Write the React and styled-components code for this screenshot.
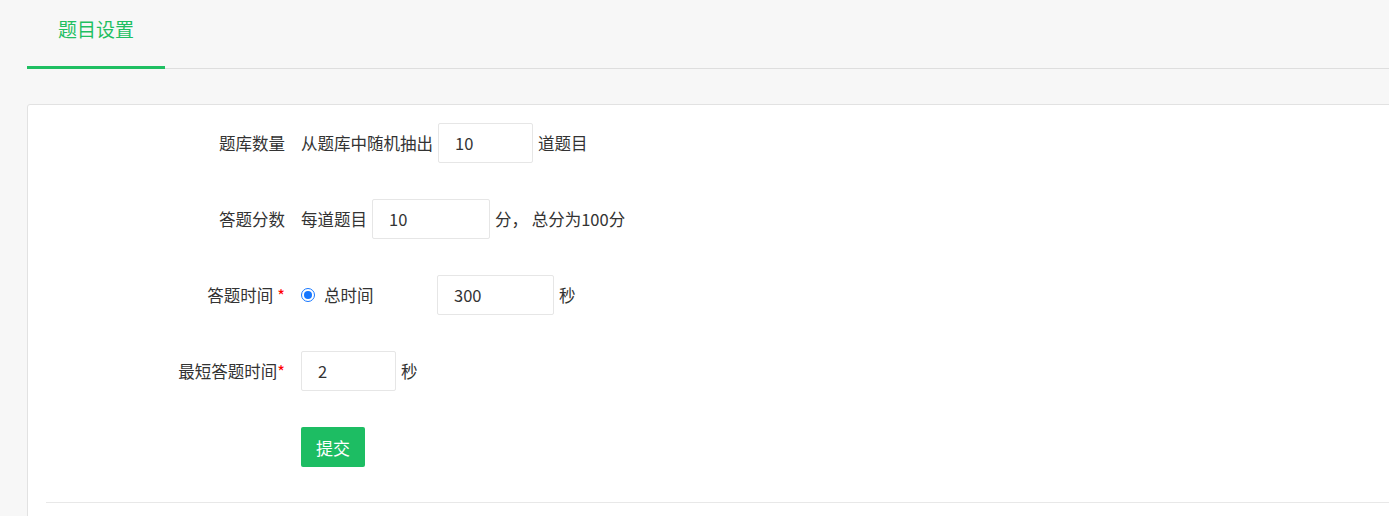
import React, { useState } from 'react';
import styled, { createGlobalStyle } from 'styled-components';

const GlobalStyle = createGlobalStyle`
  html, body {
    margin: 0;
    padding: 0;
    background: #f7f7f7;
    overflow: hidden;
  }
  body {
    font-family: "Noto Sans CJK SC", "Noto Sans", sans-serif;
    color: #333;
  }
`;

const Page = styled.div`
  padding: 0 0 0 27px;
  width: calc(100% + 10px);
  box-sizing: border-box;
`;

const TabBar = styled.div`
  display: flex;
  height: 68px;
  border-bottom: 1px solid #dedede;
`;

const Tab = styled.div`
  width: 138px;
  box-sizing: border-box;
  padding-top: 16px;
  text-align: center;
  font-size: 19px;
  color: ${(p) => (p.active ? '#1fbf62' : '#333')};
  border-bottom: 3px solid ${(p) => (p.active ? '#1fbf62' : 'transparent')};
  margin-bottom: -1px;
  line-height: 26px;
`;

const Card = styled.div`
  margin-top: 35px;
  background: #fff;
  border: 1px solid #e2e2e2;
  border-radius: 3px;
  padding: 18px 0 0 18px;
  height: 420px;
  box-sizing: border-box;
`;

const Form = styled.form`
  padding-bottom: 35px;
  border-bottom: 1px solid #e8e8e8;
`;

const Row = styled.div`
  display: flex;
  align-items: center;
  height: 40px;
  margin-bottom: ${(p) => (p.last ? '0' : '36px')};
  font-size: 16.5px;
`;

const Label = styled.label`
  width: 239px;
  text-align: right;
  padding-right: 16px;
  flex-shrink: 0;
  color: #333;
`;

const Star = styled.span`
  color: #f00;
  margin-left: ${(p) => (p.gap ? '4px' : '0')};
`;

const Text = styled.span`
  white-space: nowrap;
`;

const Input = styled.input`
  width: ${(p) => p.w}px;
  height: 40px;
  box-sizing: border-box;
  border: 1px solid #e6e6e6;
  border-radius: 2px;
  padding: 0 16px;
  margin: 0 5px 0 ${(p) => (p.flush ? '0' : '5px')};
  font-size: 16.5px;
  font-family: inherit;
  color: #333;
  outline: none;
`;

const RadioWrap = styled.label`
  display: flex;
  align-items: center;
  width: 131px;
  gap: 9px;
`;

const Radio = styled.span`
  width: 14px;
  height: 14px;
  box-sizing: border-box;
  border-radius: 50%;
  border: 1.5px solid #1677ff;
  display: flex;
  align-items: center;
  justify-content: center;
  &::after {
    content: '';
    width: 8px;
    height: 8px;
    border-radius: 50%;
    background: #1677ff;
  }
`;

const Button = styled.button`
  width: 64px;
  height: 40px;
  border: none;
  border-radius: 2px;
  background: #1dbd63;
  color: #fff;
  font-size: 17px;
  font-family: inherit;
  cursor: pointer;
`;

const App = () => {
  const [count, setCount] = useState('10');
  const [score, setScore] = useState('10');
  const [total, setTotal] = useState('300');
  const [min, setMin] = useState('2');

  return (
    <>
      <GlobalStyle />
      <Page>
        <TabBar>
          <Tab active>题目设置</Tab>
        </TabBar>
        <Card>
          <Form onSubmit={(e) => e.preventDefault()}>
            <Row>
              <Label>题库数量</Label>
              <Text>从题库中随机抽出</Text>
              <Input w={95} value={count} onChange={(e) => setCount(e.target.value)} />
              <Text>道题目</Text>
            </Row>
            <Row>
              <Label>答题分数</Label>
              <Text>每道题目</Text>
              <Input w={118} value={score} onChange={(e) => setScore(e.target.value)} />
              <Text>分， 总分为100分</Text>
            </Row>
            <Row>
              <Label>
                答题时间<Star gap>*</Star>
              </Label>
              <RadioWrap>
                <Radio />
                <Text>总时间</Text>
              </RadioWrap>
              <Input w={117} value={total} onChange={(e) => setTotal(e.target.value)} />
              <Text>秒</Text>
            </Row>
            <Row>
              <Label>
                最短答题时间<Star>*</Star>
              </Label>
              <Input flush w={95} value={min} onChange={(e) => setMin(e.target.value)} />
              <Text>秒</Text>
            </Row>
            <Row last>
              <Label />
              <Button type="submit">提交</Button>
            </Row>
          </Form>
        </Card>
      </Page>
    </>
  );
};

export default App;
